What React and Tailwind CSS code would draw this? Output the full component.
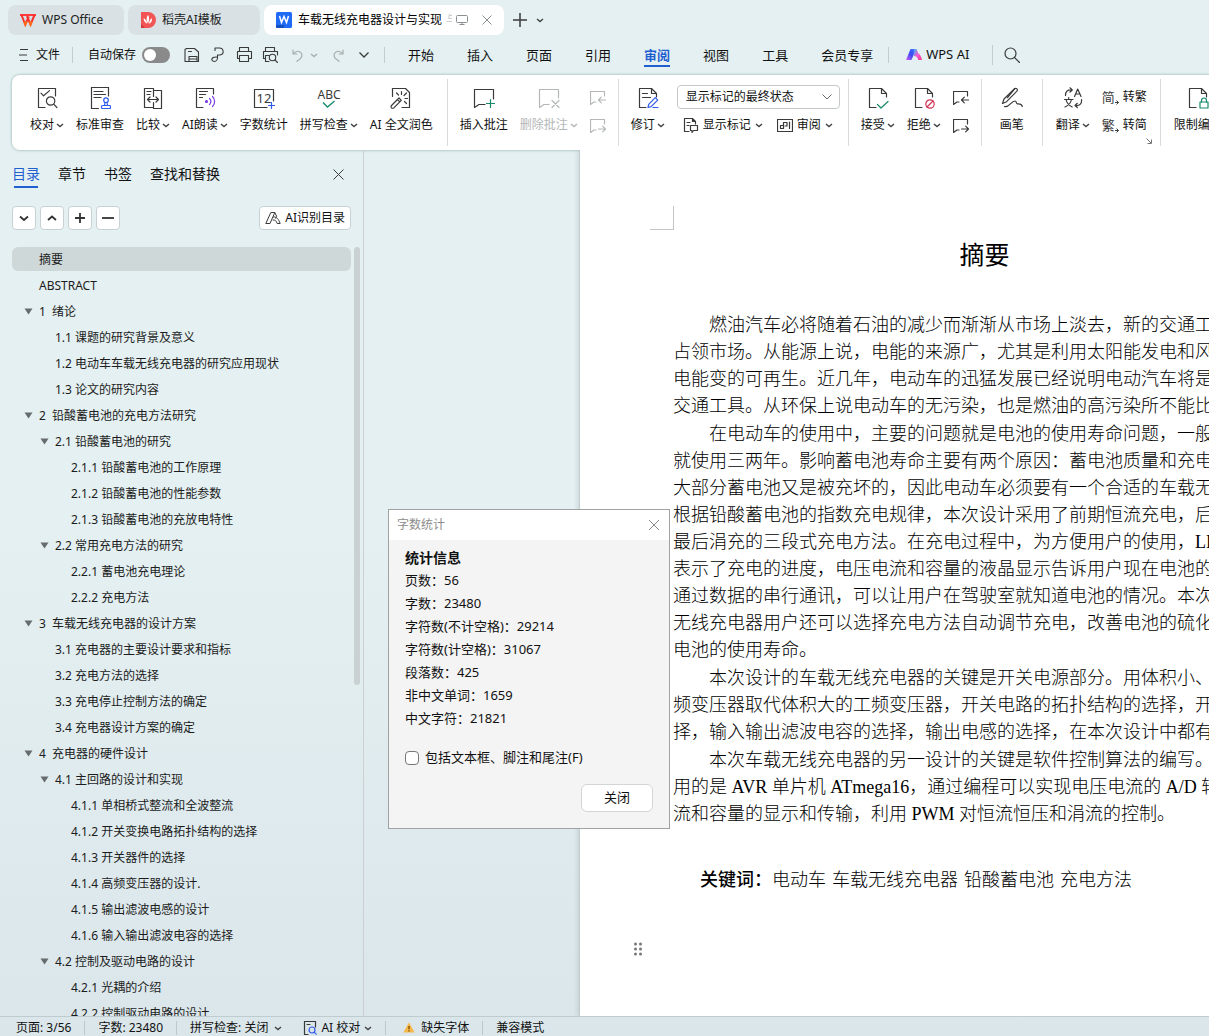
import React from "react";

const INK = "#3a3a3a";
const BLUE = "#2f5bea";
const GREEN = "#15896a";

function Icon({ size = 22, color = INK, sw = 1.2, children }) {
  return (
    <svg
      width={size}
      height={size}
      viewBox={`0 0 ${size} ${size}`}
      fill="none"
      stroke={color}
      strokeWidth={sw}
      strokeLinecap="round"
      strokeLinejoin="round"
      className="shrink-0"
      aria-hidden="true"
    >
      {children}
    </svg>
  );
}

function Caret({ color = "#444" }) {
  return (
    <svg width="8" height="8" viewBox="0 0 8 8" fill="none" stroke={color} strokeWidth="1.4" className="shrink-0" aria-hidden="true">
      <path d="M1 3l3 2.600L7 3" />
    </svg>
  );
}

const Sep = () => <div className="w-px shrink-0 self-stretch bg-[#d9dcdc]" />;

/* ---------- ribbon icons ---------- */

const ProofIcon = () => (
  <Icon>
    <path d="M9 20.5H2.5V1.5h17V9" />
    <path d="M5 6.2l2.6 2.6L13.5 3.6" />
    <circle cx="14.6" cy="14" r="4.2" />
    <path d="M17.7 17.2l3.2 3.3" />
  </Icon>
);
const StampIcon = () => (
  <Icon>
    <path d="M9.5 21.5h-7v-21h17V9" />
    <path d="M5 4.5h9M5 7.5h11.5M5 10.5h7" />
    <g stroke={BLUE}>
      <circle cx="17" cy="13.2" r="2.300" />
      <path d="M16 15.500l-.5 3M18 15.500l.5 3" />
      <rect x="12.500" y="18.500" width="9" height="3" rx="1" />
    </g>
  </Icon>
);
const CompareIcon = () => (
  <Icon>
    <path d="M11.500 9.500v-8h-9v19h8" />
    <path d="M12 3.500h7.500v18h-8v-6" />
    <path d="M5 4.500h4M5 7.500h3" />
    <path d="M5.500 12.500h11M8 10l-2.500 2.500L8 15M14 10l2.500 2.500L14 15" />
  </Icon>
);
const ReadIcon = () => (
  <Icon>
    <path d="M9 20.500H2.500v-19h17V7" />
    <path d="M5.500 4.500h8M5.500 7.500h6M5.500 10.500h3" />
    <g stroke="#7a3fe8">
      <circle cx="12.500" cy="14.500" r="1" fill="#7a3fe8" />
      <path d="M15.500 11.500c1.600 1.700 1.600 4.300 0 6M18.500 9.500c2.800 2.800 2.800 7.200 0 10" />
    </g>
  </Icon>
);
const CountIcon = () => (
  <Icon>
    <path d="M14 20.500H1.500v-18h19V14" />
    <path d="M18.500 15.500v6M15.500 18.500h6" stroke={BLUE} />
    <text x="11" y="16" textAnchor="middle" fontSize="13" fill={INK} stroke="none" fontFamily="Noto Sans, sans-serif">12</text>
  </Icon>
);
const SpellIcon = () => (
  <svg width="26" height="22" viewBox="0 0 26 22" fill="none" aria-hidden="true" className="shrink-0">
    <text x="13" y="12" textAnchor="middle" fontSize="12" fill={INK} fontFamily="Noto Sans, sans-serif">ABC</text>
    <path d="M7 15.500l4.500 4.500 7-6" stroke={GREEN} strokeWidth="1.300" />
  </svg>
);
const WandIcon = () => (
  <Icon>
    <path d="M2.500 9.500v-8h13l4 4v15H12" />
    <path d="M1.500 18.500l7.500-7.500 2.300 2.300-7.500 7.500c-.6.6-1.700.6-2.300 0-.6-.6-.6-1.700 0-2.300zM7.500 12.500l2.300 2.300" />
    <path d="M11.500 4.500v3M6.500 6l2 2M16.500 6l-2.500 2.500M15 11.500h2.500M14.500 14.500l2 2" />
  </Icon>
);
const AddNoteIcon = () => (
  <Icon>
    <path d="M20.500 12V2.500h-19v18l4.500-3h6" />
    <path d="M17.500 12.500v8M13.500 16.500h8" stroke={GREEN} />
  </Icon>
);
const DelNoteIcon = () => (
  <Icon color="#b4b7b8">
    <path d="M20.500 11V2.500h-19v18l4.500-3h5" />
    <path d="M14 13.500l7 7M21 13.500l-7 7" />
  </Icon>
);
const PrevNote = ({ color }) => (
  <Icon size={16} color={color}>
    <path d="M14.500 6V1.500h-14v13l3.500-2.500h2" />
    <path d="M15.500 10h-7M11.300 7.200L8.500 10l2.800 2.800" />
  </Icon>
);
const NextNote = ({ color }) => (
  <Icon size={16} color={color}>
    <path d="M14.500 6V1.500h-14v13l3.500-2.500h2" />
    <path d="M8.500 11h7M12.700 8.200l2.800 2.800-2.800 2.800" />
  </Icon>
);
const PageFold = () => (
  <>
    <path d="M9 20.500H2.500v-19h12l5 5V10" />
    <path d="M14.500 1.500v5h5" />
  </>
);
const ReviseIcon = () => (
  <Icon>
    <PageFold />
    <path d="M5.500 6.500h5M5.500 10.500h8" />
    <path d="M11 20.500l.7-3.200 6.600-6.600 2.400 2.400-6.600 6.600-3.100.8zM16 20.500h5" stroke={BLUE} />
  </Icon>
);
const AcceptIcon = () => (
  <Icon>
    <PageFold />
    <path d="M10.500 17.500l3.500 3.500 7-6.500" stroke={GREEN} />
  </Icon>
);
const RejectIcon = () => (
  <Icon>
    <PageFold />
    <g stroke="#cf3455">
      <circle cx="17" cy="17" r="4.200" />
      <path d="M14 20l6-6" />
    </g>
  </Icon>
);
const PenIcon = () => (
  <Icon>
    <path d="M1.500 16.500L3 12 13.500 1.800c.7-.7 1.700-.7 2.400 0 .7.700.7 1.700 0 2.400L5.600 14.700z" />
    <path d="M13.500 2l-7 8.500" />
    <path d="M3.500 19.500c4.500 1.500 6.500-5.500 10.500-5.500 1.800 0 .8 2.700 2.300 2.900 1.600 0 4.200-.6 5 2.600" />
  </Icon>
);
const TranslateIcon = () => (
  <Icon>
    <path d="M3.500 8.500c0-4 2-6 6.500-5.500M8 .8L10.300 3 8 5M19.500 12.500c.5 4-1.500 6.500-6 6M15.300 16.300l-2.300 2.200 2.300 2" />
    <path d="M12.500 9.500l3.200-7.500L19 9.500M13.600 7h4.300" />
    <path d="M2.500 12.500h8.500M6.700 10.500v2M4.200 13c.6 3 2.800 5.500 6 7M9.300 13c-.6 3-2.800 5.500-6.300 7" />
  </Icon>
);
const LockIcon = () => (
  <Icon>
    <PageFold />
    <g stroke={GREEN}>
      <rect x="13" y="15" width="8" height="6" />
      <path d="M14.500 15v-1.500a2.500 2.500 0 015 0V15" />
    </g>
  </Icon>
);

function Big({ icon, label, caret, disabled }) {
  return (
    <button
      type="button"
      disabled={disabled}
      className="flex shrink-0 flex-col items-center gap-2 whitespace-nowrap text-[12px] leading-4 text-[#111] disabled:text-[#b4b7b8]"
    >
      {icon}
      <span className="flex items-center gap-0.5">
        {label}
        {caret && <Caret color={disabled ? "#b4b7b8" : "#444"} />}
      </span>
    </button>
  );
}

function SmallPair({ color, label }) {
  return (
    <div className="flex shrink-0 flex-col gap-3 pt-[3px]">
      <button type="button" aria-label={`上一条${label}`} className="h-4"><PrevNote color={color} /></button>
      <button type="button" aria-label={`下一条${label}`} className="h-4"><NextNote color={color} /></button>
    </div>
  );
}

function Convert({ glyph, label }) {
  return (
    <button type="button" className="flex h-[18px] items-center gap-1 whitespace-nowrap text-[12px] text-[#111]">
      <span className="flex items-end text-[#3a3a3a]">
        <span className="text-[13px] leading-[18px]">{glyph}</span>
        <svg width="4" height="7" viewBox="0 0 4 7" fill="none" stroke={INK} aria-hidden="true">
          <path d="M0 3.500h3.500M1.500 1.500l2 2-2 2" />
        </svg>
      </span>
      {label}
    </button>
  );
}

/* ---------- window sections ---------- */

function TabBar() {
  return (
    <div className="flex h-[35px] shrink-0 items-end pl-2 text-[12px] text-[#222]">
      <button type="button" className="flex h-[30px] w-[116px] items-center gap-1.5 rounded-lg bg-[#d9e1e4] pl-3">
        <svg width="16" height="14" viewBox="0 0 16 14" fill="none" strokeWidth="2" aria-hidden="true">
          <path d="M0 2h16" stroke="#ff3a3a" />
          <path d="M1.500 2l3.800 9.500L8.800 3.500M7 3l3.500 8.500L14.500 2" stroke="#f5302e" />
          <path d="M4.200 8.500l1.100 3 1.300-3M9.300 8.500l1.200 3 1.300-3" stroke="#ff6a1a" />
        </svg>
        WPS Office
      </button>
      <button type="button" className="ml-1 flex h-[30px] w-[132px] items-center gap-1.5 rounded-lg bg-[#d9e1e4] pl-3">
        <svg width="16" height="16" viewBox="0 0 16 16" aria-hidden="true">
          <path d="M1 0h7a8 8 0 010 16H1z" fill="#f25555" />
          <path d="M8 3c1.300 1.500 1.500 4.500.2 8.500C6 8.500 6.400 5 8 3zM3.600 6.200c2 .8 3.200 2.700 3.600 5.500-2.400-1-3.600-3-3.600-5.500zM12 6.200c.2 2.600-.8 4.600-3 5.500.2-2.600 1.300-4.600 3-5.500z" fill="#fff" />
          <path d="M1 12l4 4H1z" fill="#c93a3a" />
        </svg>
        稻壳AI模板
      </button>
      <div className="ml-1 flex h-[30px] w-[240px] items-center rounded-lg bg-white pl-3 text-black">
        <svg width="16" height="16" viewBox="0 0 16 16" aria-hidden="true">
          <rect width="16" height="16" rx="1.500" fill="#1f6bf5" />
          <path d="M3.500 4l2 6.500L8 4.500l2.500 6L12.500 4" fill="none" stroke="#fff" strokeWidth="1.500" />
          <path d="M0 13h8v3H1.500A1.500 1.500 0 010 14.500z" fill="#1450c0" />
        </svg>
        <span className="ml-1.5 whitespace-nowrap">车载无线充电器设计与实现</span>
        <span className="ml-1 w-[6px] overflow-hidden whitespace-nowrap text-[#ccc]">与</span>
        <svg width="12" height="12" viewBox="0 0 12 12" fill="none" stroke="#8a8f91" className="ml-1 shrink-0" aria-hidden="true">
          <rect x=".5" y="1.500" width="11" height="7" rx="1" />
          <path d="M3.500 10.500h5M6 8.500v2" />
        </svg>
        <button type="button" aria-label="关闭标签" className="ml-3.5">
          <svg width="10" height="10" viewBox="0 0 10 10" stroke="#8a8f91" aria-hidden="true"><path d="M.5.500l9 9M9.500.500l-9 9" /></svg>
        </button>
      </div>
      <button type="button" aria-label="新建" className="ml-[9px] flex h-[30px] items-center">
        <svg width="14" height="14" viewBox="0 0 14 14" stroke="#3a3a3a" strokeWidth="1.500" aria-hidden="true"><path d="M7 0v14M0 7h14" /></svg>
      </button>
      <button type="button" aria-label="标签列表" className="ml-[9px] flex h-[30px] items-center"><Caret /></button>
    </div>
  );
}

const menus = ["开始", "插入", "页面", "引用", "审阅", "视图", "工具", "会员专享"];

function MenuBar() {
  return (
    <div className="flex h-[40px] shrink-0 items-center whitespace-nowrap text-[12px] text-[#111]">
      <button type="button" className="ml-[19px] flex items-center gap-2">
        <svg width="9" height="12" viewBox="0 0 9 12" stroke="#3a3a3a" aria-hidden="true"><path d="M1 .500h8M0 6h8M1 11.500h8" /></svg>
        文件
      </button>
      <div className="ml-3 h-4 w-px bg-[#c3cdcf]" />
      <label className="ml-[15px] flex items-center gap-1.5">
        自动保存
        <input type="checkbox" role="switch" className="peer sr-only" />
        <span className="flex h-4 w-7 items-center rounded-full bg-[#8a8a8a] p-0.5 peer-checked:justify-end">
          <span className="size-3 rounded-full bg-white" />
        </span>
      </label>
      <div className="ml-[13px] flex items-center gap-2">
        <button type="button" aria-label="保存" className="h-[18px]">
          <Icon size={18} sw={1.1}><path d="M3.500 2.500h8l4 3.500v9.500h-1.500v-5h-8v5h-4v-12zM5.500 5.500h3M6 13h8M6 15.500h8" /></Icon>
        </button>
        <button type="button" aria-label="输出PDF" className="h-[18px]">
          <Icon size={18} sw={1.1}><path d="M6 4.500V2h4.500c4.500 0 5 6.500.5 7H8.500v2.500c0 1.500-1 4-3 4-2.500 0-3.500-2-2-3.500 1-1 2.500-1 4-1" /></Icon>
        </button>
        <button type="button" aria-label="打印" className="h-[18px]">
          <Icon size={18} sw={1.1}><path d="M4.500 5.500v-4h9v4M4.500 12.500h-2v-7h14v7h-2M4.500 9.500h9v6h-9z" /></Icon>
        </button>
        <button type="button" aria-label="打印预览" className="h-[18px]">
          <Icon size={18} sw={1.1}><path d="M4.500 5.500v-4h9v4M4.500 12.500h-2v-7h14V9M4.500 9.500v6H8M4.500 9.500H8" /><circle cx="11.500" cy="11.500" r="3.200" /><path d="M14 14l2.500 2.500" /></Icon>
        </button>
      </div>
      <button type="button" aria-label="撤销" className="ml-3 flex items-center gap-1.5">
        <Icon size={13} color="#a7afb1"><path d="M2 1v4h4M2.300 5C4 2.500 7 1.800 9 3c2.500 1.500 2.500 4.500.5 6.500L6 12.300" /></Icon>
        <Caret color="#a7afb1" />
      </button>
      <button type="button" aria-label="恢复" className="ml-3.5">
        <Icon size={13} color="#a7afb1"><path d="M11 1v4H7M10.700 5C9 2.500 6 1.800 4 3 1.500 4.500 1.500 7.500 3.500 9.500L7 12.300" /></Icon>
      </button>
      <button type="button" aria-label="更多" className="ml-3.5">
        <svg width="10" height="6" viewBox="0 0 10 6" fill="none" stroke="#3a3a3a" strokeWidth="1.300" aria-hidden="true"><path d="M.5.500L5 5 9.500.500" /></svg>
      </button>
      <div className="ml-[15px] h-4 w-px bg-[#c3cdcf]" />
      <nav className="ml-[23px] flex gap-[33px] text-[13px] leading-5">
        {menus.map((m) => (
          <button
            key={m}
            type="button"
            className={
              m === "审阅"
                ? "border-y-2 border-t-transparent border-b-[#1f5fd0] font-bold text-[#1f5fd0]"
                : "border-y-2 border-transparent"
            }
          >
            {m}
          </button>
        ))}
      </nav>
      <div className="ml-[15px] h-4 w-px bg-[#c3cdcf]" />
      <button type="button" className="ml-[17px] flex items-center gap-1 text-[13px]">
        <svg width="16" height="12" viewBox="0 0 16 12" aria-hidden="true">
          <defs>
            <linearGradient id="aiL" x1="0" y1="1" x2="1" y2="0"><stop offset="0" stopColor="#d05cf5" /><stop offset=".5" stopColor="#3a4cf5" /><stop offset="1" stopColor="#3b7bff" /></linearGradient>
            <linearGradient id="aiR" x1="0" y1="0" x2="1" y2="1"><stop offset="0" stopColor="#3bb6f5" /><stop offset=".5" stopColor="#f25ad0" /><stop offset="1" stopColor="#f53a8a" /></linearGradient>
          </defs>
          <path d="M4.500 0H10L5.500 11H0z" fill="url(#aiL)" />
          <path d="M8 0h2.500l1.700 4.200c2 .8 3 3.300 3.800 6.800h-3.800c-.6-2.800-1.800-4-4.400-4z" fill="url(#aiR)" />
        </svg>
        WPS AI
      </button>
      <div className="ml-[23px] h-5 w-px bg-[#c3cdcf]" />
      <button type="button" aria-label="搜索" className="ml-[11px]">
        <Icon size={16}><circle cx="6.500" cy="6.500" r="5.500" /><path d="M10.500 10.500l5 5" /></Icon>
      </button>
    </div>
  );
}

function Ribbon() {
  return (
    <div className="ml-3 flex h-[75px] shrink-0 overflow-hidden rounded-l-lg bg-white py-1 pl-[18px] shadow-[0_0_2px_1px_rgba(120,150,150,0.4)]">
      <div className="flex gap-3 pr-3.5 pt-2">
        <Big icon={<ProofIcon />} label="校对" caret />
        <Big icon={<StampIcon />} label="标准审查" />
        <Big icon={<CompareIcon />} label="比较" caret />
        <Big icon={<ReadIcon />} label="AI朗读" caret />
        <Big icon={<CountIcon />} label="字数统计" />
        <Big icon={<SpellIcon />} label="拼写检查" caret />
        <Big icon={<WandIcon />} label="AI 全文润色" />
      </div>
      <Sep />
      <div className="flex gap-3 px-3 pt-2">
        <Big icon={<AddNoteIcon />} label="插入批注" />
        <Big icon={<DelNoteIcon />} label="删除批注" caret disabled />
        <SmallPair color="#b4b7b8" label="批注" />
      </div>
      <Sep />
      <div className="flex gap-3 pl-3 pr-2 pt-2">
        <Big icon={<ReviseIcon />} label="修订" caret />
        <div className="flex w-[163px] shrink-0 flex-col gap-2 text-[12px] text-[#111]">
          <div className="relative -mt-0.5">
            <select aria-label="显示标记状态" className="h-6 w-full appearance-none rounded border border-[#c4c8c9] bg-white pl-2 text-[12px]">
              <option>显示标记的最终状态</option>
            </select>
            <svg width="10" height="6" viewBox="0 0 10 6" fill="none" stroke="#666" className="pointer-events-none absolute right-2 top-[9px]" aria-hidden="true"><path d="M.5.500L5 5 9.500.500" /></svg>
          </div>
          <div className="flex h-4 items-center gap-3.5 whitespace-nowrap pl-1.5">
            <button type="button" className="flex items-center gap-1">
              <Icon size={16}><path d="M6 14.500H1.500v-13h8l3 3v2.500M9.500 1.500v3h3M4 5.500h3M4 8.500h2M7.500 8.500h7v5h-4l-1.500 2v-2H7.500z" /></Icon>
              显示标记
              <Caret />
            </button>
            <button type="button" className="flex items-center gap-1">
              <Icon size={16}><path d="M.5 2.500h15v12H.500zM12.500 5v6.500M3.500 8.500h3v3h-3zM6.500 8.500v-3h3.500v3.500h-2" /></Icon>
              审阅
              <Caret />
            </button>
          </div>
        </div>
      </div>
      <Sep />
      <div className="flex gap-3 px-3 pt-2">
        <Big icon={<AcceptIcon />} label="接受" caret />
        <Big icon={<RejectIcon />} label="拒绝" caret />
        <SmallPair color={INK} label="修订" />
      </div>
      <Sep />
      <div className="flex px-[18px] pt-2">
        <Big icon={<PenIcon />} label="画笔" />
      </div>
      <Sep />
      <div className="relative flex gap-3 px-[13px] pt-2">
        <Big icon={<TranslateIcon />} label="翻译" caret />
        <div className="flex flex-col gap-2.5 pt-px">
          <Convert glyph="简" label="转繁" />
          <Convert glyph="繁" label="转简" />
        </div>
        <svg width="6" height="6" viewBox="0 0 6 6" fill="none" stroke="#777" className="absolute bottom-0.5 right-2" aria-hidden="true"><path d="M.5.500l4.500 4.500M5.500 1.500v4h-4" /></svg>
      </div>
      <Sep />
      <div className="flex pl-[13px] pt-2">
        <Big icon={<LockIcon />} label="限制编辑" />
      </div>
    </div>
  );
}

const tree = [
  [0, "摘要", false],
  [0, "ABSTRACT", false],
  [0, "1  绪论", true],
  [1, "1.1 课题的研究背景及意义", false],
  [1, "1.2 电动车车载无线充电器的研究应用现状", false],
  [1, "1.3 论文的研究内容", false],
  [0, "2  铅酸蓄电池的充电方法研究", true],
  [1, "2.1 铅酸蓄电池的研究", true],
  [2, "2.1.1 铅酸蓄电池的工作原理", false],
  [2, "2.1.2 铅酸蓄电池的性能参数", false],
  [2, "2.1.3 铅酸蓄电池的充放电特性", false],
  [1, "2.2 常用充电方法的研究", true],
  [2, "2.2.1 蓄电池充电理论", false],
  [2, "2.2.2 充电方法", false],
  [0, "3  车载无线充电器的设计方案", true],
  [1, "3.1 充电器的主要设计要求和指标", false],
  [1, "3.2 充电方法的选择", false],
  [1, "3.3 充电停止控制方法的确定", false],
  [1, "3.4 充电器设计方案的确定", false],
  [0, "4  充电器的硬件设计", true],
  [1, "4.1 主回路的设计和实现", true],
  [2, "4.1.1 单相桥式整流和全波整流", false],
  [2, "4.1.2 开关变换电路拓扑结构的选择", false],
  [2, "4.1.3 开关器件的选择", false],
  [2, "4.1.4 高频变压器的设计.", false],
  [2, "4.1.5 输出滤波电感的设计", false],
  [2, "4.1.6 输入输出滤波电容的选择", false],
  [1, "4.2 控制及驱动电路的设计", true],
  [2, "4.2.1 光耦的介绍", false],
  [2, "4.2.2 控制驱动电路的设计", false],
];
const indent = ["pl-3", "pl-7", "pl-11"];

const tools = [
  ["全部折叠", "M2 4.500L6 8l4-3.500"],
  ["全部展开", "M2 8L6 4.500 10 8"],
  ["提升级别", "M6 1v10M1 6h10"],
  ["降低级别", "M0 6h12"],
];

function Sidebar() {
  return (
    <aside className="flex w-[364px] shrink-0 flex-col border-r border-[#ccd0d2] pl-3 pr-[3px]">
      <div className="flex shrink-0 items-start pr-4 pt-3.5 text-[14px] leading-5 text-[#111]">
        <div className="flex flex-1 gap-[18px]">
          <button type="button" className="flex flex-col items-center gap-0.5 text-[#1f5fd0]">
            目录
            <span className="h-0.5 w-6 bg-[#1f5fd0]" />
          </button>
          <button type="button" className="h-5">章节</button>
          <button type="button" className="h-5">书签</button>
          <button type="button" className="h-5">查找和替换</button>
        </div>
        <button type="button" aria-label="关闭窗格" className="flex h-5 items-center">
          <svg width="11" height="11" viewBox="0 0 11 11" stroke="#3a3a3a" aria-hidden="true"><path d="M.5.500l10 10M10.500.500l-10 10" /></svg>
        </button>
      </div>
      <div className="mt-[18px] flex shrink-0 items-center gap-1 pr-[9px]">
        {tools.map(([name, d]) => (
          <button key={name} type="button" aria-label={name} className="flex size-6 items-center justify-center rounded border border-[#c8d2d4] bg-white">
            <svg width="12" height="12" viewBox="0 0 12 12" fill="none" stroke="#333" strokeWidth="1.800" className="shrink-0" aria-hidden="true"><path d={d} /></svg>
          </button>
        ))}
        <button type="button" className="ml-auto flex h-6 items-center gap-1 rounded border border-[#c8d2d4] bg-white px-[5px] text-[12px] text-[#111]">
          <svg width="16" height="14" viewBox="0 0 16 14" fill="none" stroke="#3a3a3a" aria-hidden="true">
            <path d="M.8 12.500L5.800 1.500h4L5 12.500zM9.800 1.500l1.700 3.500c.3.800-.3 2-1.500 2.500M8 6c3.500-.5 5.500 2 7.200 6.500h-3c-.8-2.500-2.200-4-4.500-3.500" />
          </svg>
          AI识别目录
        </button>
      </div>
      <div className="mt-[17px] flex min-h-0 flex-1 overflow-hidden">
        <ul className="flex-1 text-[12px] text-[#1c1c1c]">
          {tree.map(([level, text, open], i) => (
            <li key={text} className="h-[26px]">
              <a
                href="#"
                className={`flex h-6 items-center whitespace-pre rounded-md pt-0.5 ${indent[level]} ${i === 0 ? "bg-[#cfd8d9]" : ""}`}
              >
                <span className="flex w-[15px] shrink-0 pb-0.5">
                  {open && <svg width="9" height="7" viewBox="0 0 9 7" className="shrink-0" aria-hidden="true"><path d="M.5.500h8L4.500 6.500z" fill="#666b6d" /></svg>}
                </span>
                {text}
              </a>
            </li>
          ))}
        </ul>
        <div className="ml-[3px] h-[438px] w-1.5 rounded-full bg-[#c9d1d2]" />
      </div>
    </aside>
  );
}

const paragraphs = [
  [
    "燃油汽车必将随着石油的减少而渐渐从市场上淡去，新的交通工",
    "占领市场。从能源上说，电能的来源广，尤其是利用太阳能发电和风",
    "电能变的可再生。近几年，电动车的迅猛发展已经说明电动汽车将是",
    "交通工具。从环保上说电动车的无污染，也是燃油的高污染所不能比的",
  ],
  [
    "在电动车的使用中，主要的问题就是电池的使用寿命问题，一般",
    "就使用三两年。影响蓄电池寿命主要有两个原因：蓄电池质量和充电",
    "大部分蓄电池又是被充坏的，因此电动车必须要有一个合适的车载无线",
    "根据铅酸蓄电池的指数充电规律，本次设计采用了前期恒流充电，后期",
    "最后涓充的三段式充电方法。在充电过程中，为方便用户的使用，LED",
    "表示了充电的进度，电压电流和容量的液晶显示告诉用户现在电池的",
    "通过数据的串行通讯，可以让用户在驾驶室就知道电池的情况。本次",
    "无线充电器用户还可以选择充电方法自动调节充电，改善电池的硫化",
    "电池的使用寿命。",
  ],
  [
    "本次设计的车载无线充电器的关键是开关电源部分。用体积小、效",
    "频变压器取代体积大的工频变压器，开关电路的拓扑结构的选择，开",
    "择，输入输出滤波电容的选择，输出电感的选择，在本次设计中都有详",
  ],
  [
    "本次车载无线充电器的另一设计的关键是软件控制算法的编写。本",
    "用的是 AVR 单片机 ATmega16，通过编程可以实现电压电流的 A/D 转",
    "流和容量的显示和传输，利用 PWM 对恒流恒压和涓流的控制。",
  ],
];

function Page() {
  return (
    <article className="ml-[215px] w-[794px] shrink-0 border-l border-[#c3cbcd] bg-white pr-[77px] text-black shadow-[-2px_0_4px_rgba(80,100,110,0.15)]">
      <div className="ml-[70px] mt-14 h-6 w-6 border-b border-r border-[#c4c4c4]" />
      <div className="pl-[93px] font-['Liberation_Serif','Noto_Sans_CJK_SC',serif] text-[18px] leading-[27px]">
        <h1 className="mt-2 text-center text-[25px] leading-9">摘要</h1>
        <div className="mt-[38px] flex flex-col gap-px font-light">
          {paragraphs.map((lines) => (
            <p key={lines[0]} className="whitespace-nowrap indent-9">
              {lines.map((l, i) => (
                <React.Fragment key={l}>
                  {l}
                  {i < lines.length - 1 && <br />}
                </React.Fragment>
              ))}
            </p>
          ))}
        </div>
        <p className="mt-[39px] flex gap-1.5 whitespace-nowrap pl-[27px] font-light">
          <span><b className="font-medium">关键词：</b>电动车</span>
          <span>车载无线充电器</span>
          <span>铅酸蓄电池</span>
          <span>充电方法</span>
        </p>
      </div>
      <svg width="10" height="14" viewBox="0 0 10 14" fill="#777" className="ml-[53px] mt-12" aria-hidden="true">
        {[2, 7, 12].map((y) => (
          <g key={y}>
            <circle cx="2.500" cy={y} r="1.500" />
            <circle cx="7.500" cy={y} r="1.500" />
          </g>
        ))}
      </svg>
    </article>
  );
}

const stats = [
  "页数：56",
  "字数：23480",
  "字符数(不计空格)：29214",
  "字符数(计空格)：31067",
  "段落数：425",
  "非中文单词：1659",
  "中文字符：21821",
];

function CountDialog() {
  return (
    <div role="dialog" aria-label="字数统计" className="absolute left-[388px] top-[509px] w-[282px] border border-[#9fa2a3] bg-[#f4f4f4] text-[13px] text-[#111]">
      <div className="flex h-[30px] items-center justify-between bg-white pl-2 pr-[9px] text-[12px] text-[#8d8d8d]">
        字数统计
        <button type="button" aria-label="关闭窗口">
          <svg width="12" height="12" viewBox="0 0 12 12" stroke="#8d8d8d" aria-hidden="true"><path d="M1 1l10 10M11 1L1 11" /></svg>
        </button>
      </div>
      <div className="px-4 pb-4 pt-1.5">
        <h2 className="text-[14px] font-bold leading-[23px]">统计信息</h2>
        {stats.map((s) => (
          <p key={s} className="leading-[23px]">{s}</p>
        ))}
        <label className="mt-4 flex h-[23px] items-center gap-1.5">
          <input type="checkbox" className="size-[14px] appearance-none rounded-sm border border-[#777] bg-white checked:bg-blue-600" />
          包括文本框、脚注和尾注(F)
        </label>
        <div className="mt-[15px] flex justify-end">
          <button type="button" className="h-7 w-[72px] rounded-md border border-[#d5d5d5] bg-white">关闭</button>
        </div>
      </div>
    </div>
  );
}

function StatusBar() {
  const line = <span className="h-3.5 w-px bg-[#bcc8cb]" />;
  return (
    <footer className="flex h-5 shrink-0 items-center gap-[13px] whitespace-nowrap border-t border-[#bfcccf] pl-4 pt-0.5 text-[12px] text-[#111]">
      <span>页面: 3/56</span>
      {line}
      <span>字数: 23480</span>
      {line}
      <button type="button" className="flex items-center gap-1.5">拼写检查: 关闭 <Caret /></button>
      <button type="button" className="ml-2 flex items-center gap-1">
        <Icon size={14}><path d="M5 13.500H1.500v-13h11V6M4 3.500h3" /><g stroke={BLUE}><circle cx="9" cy="9" r="3" /><path d="M11.200 11.200l2 2" /></g></Icon>
        AI 校对 <Caret />
      </button>
      {line}
      <button type="button" className="ml-1 flex items-center gap-1.5">
        <svg width="12" height="11" viewBox="0 0 12 11" aria-hidden="true">
          <path d="M6 .500L11.700 10.500H.3z" fill="#f7b84b" />
          <path d="M6 4v3.200M6 8.200v1.300" stroke="#7a4a00" strokeWidth="1.300" />
        </svg>
        缺失字体
      </button>
      {line}
      <span>兼容模式</span>
    </footer>
  );
}

export default function App() {
  return (
    <div className="relative flex h-screen flex-col overflow-hidden bg-linear-to-b from-[#e4f0f1] via-[#e4f0f1] to-[#dae6ea] font-['Noto_Sans','Noto_Sans_CJK_SC',sans-serif]">
      <TabBar />
      <MenuBar />
      <Ribbon />
      <main className="flex min-h-0 flex-1 overflow-hidden">
        <Sidebar />
        <Page />
      </main>
      <StatusBar />
      <CountDialog />
    </div>
  );
}
